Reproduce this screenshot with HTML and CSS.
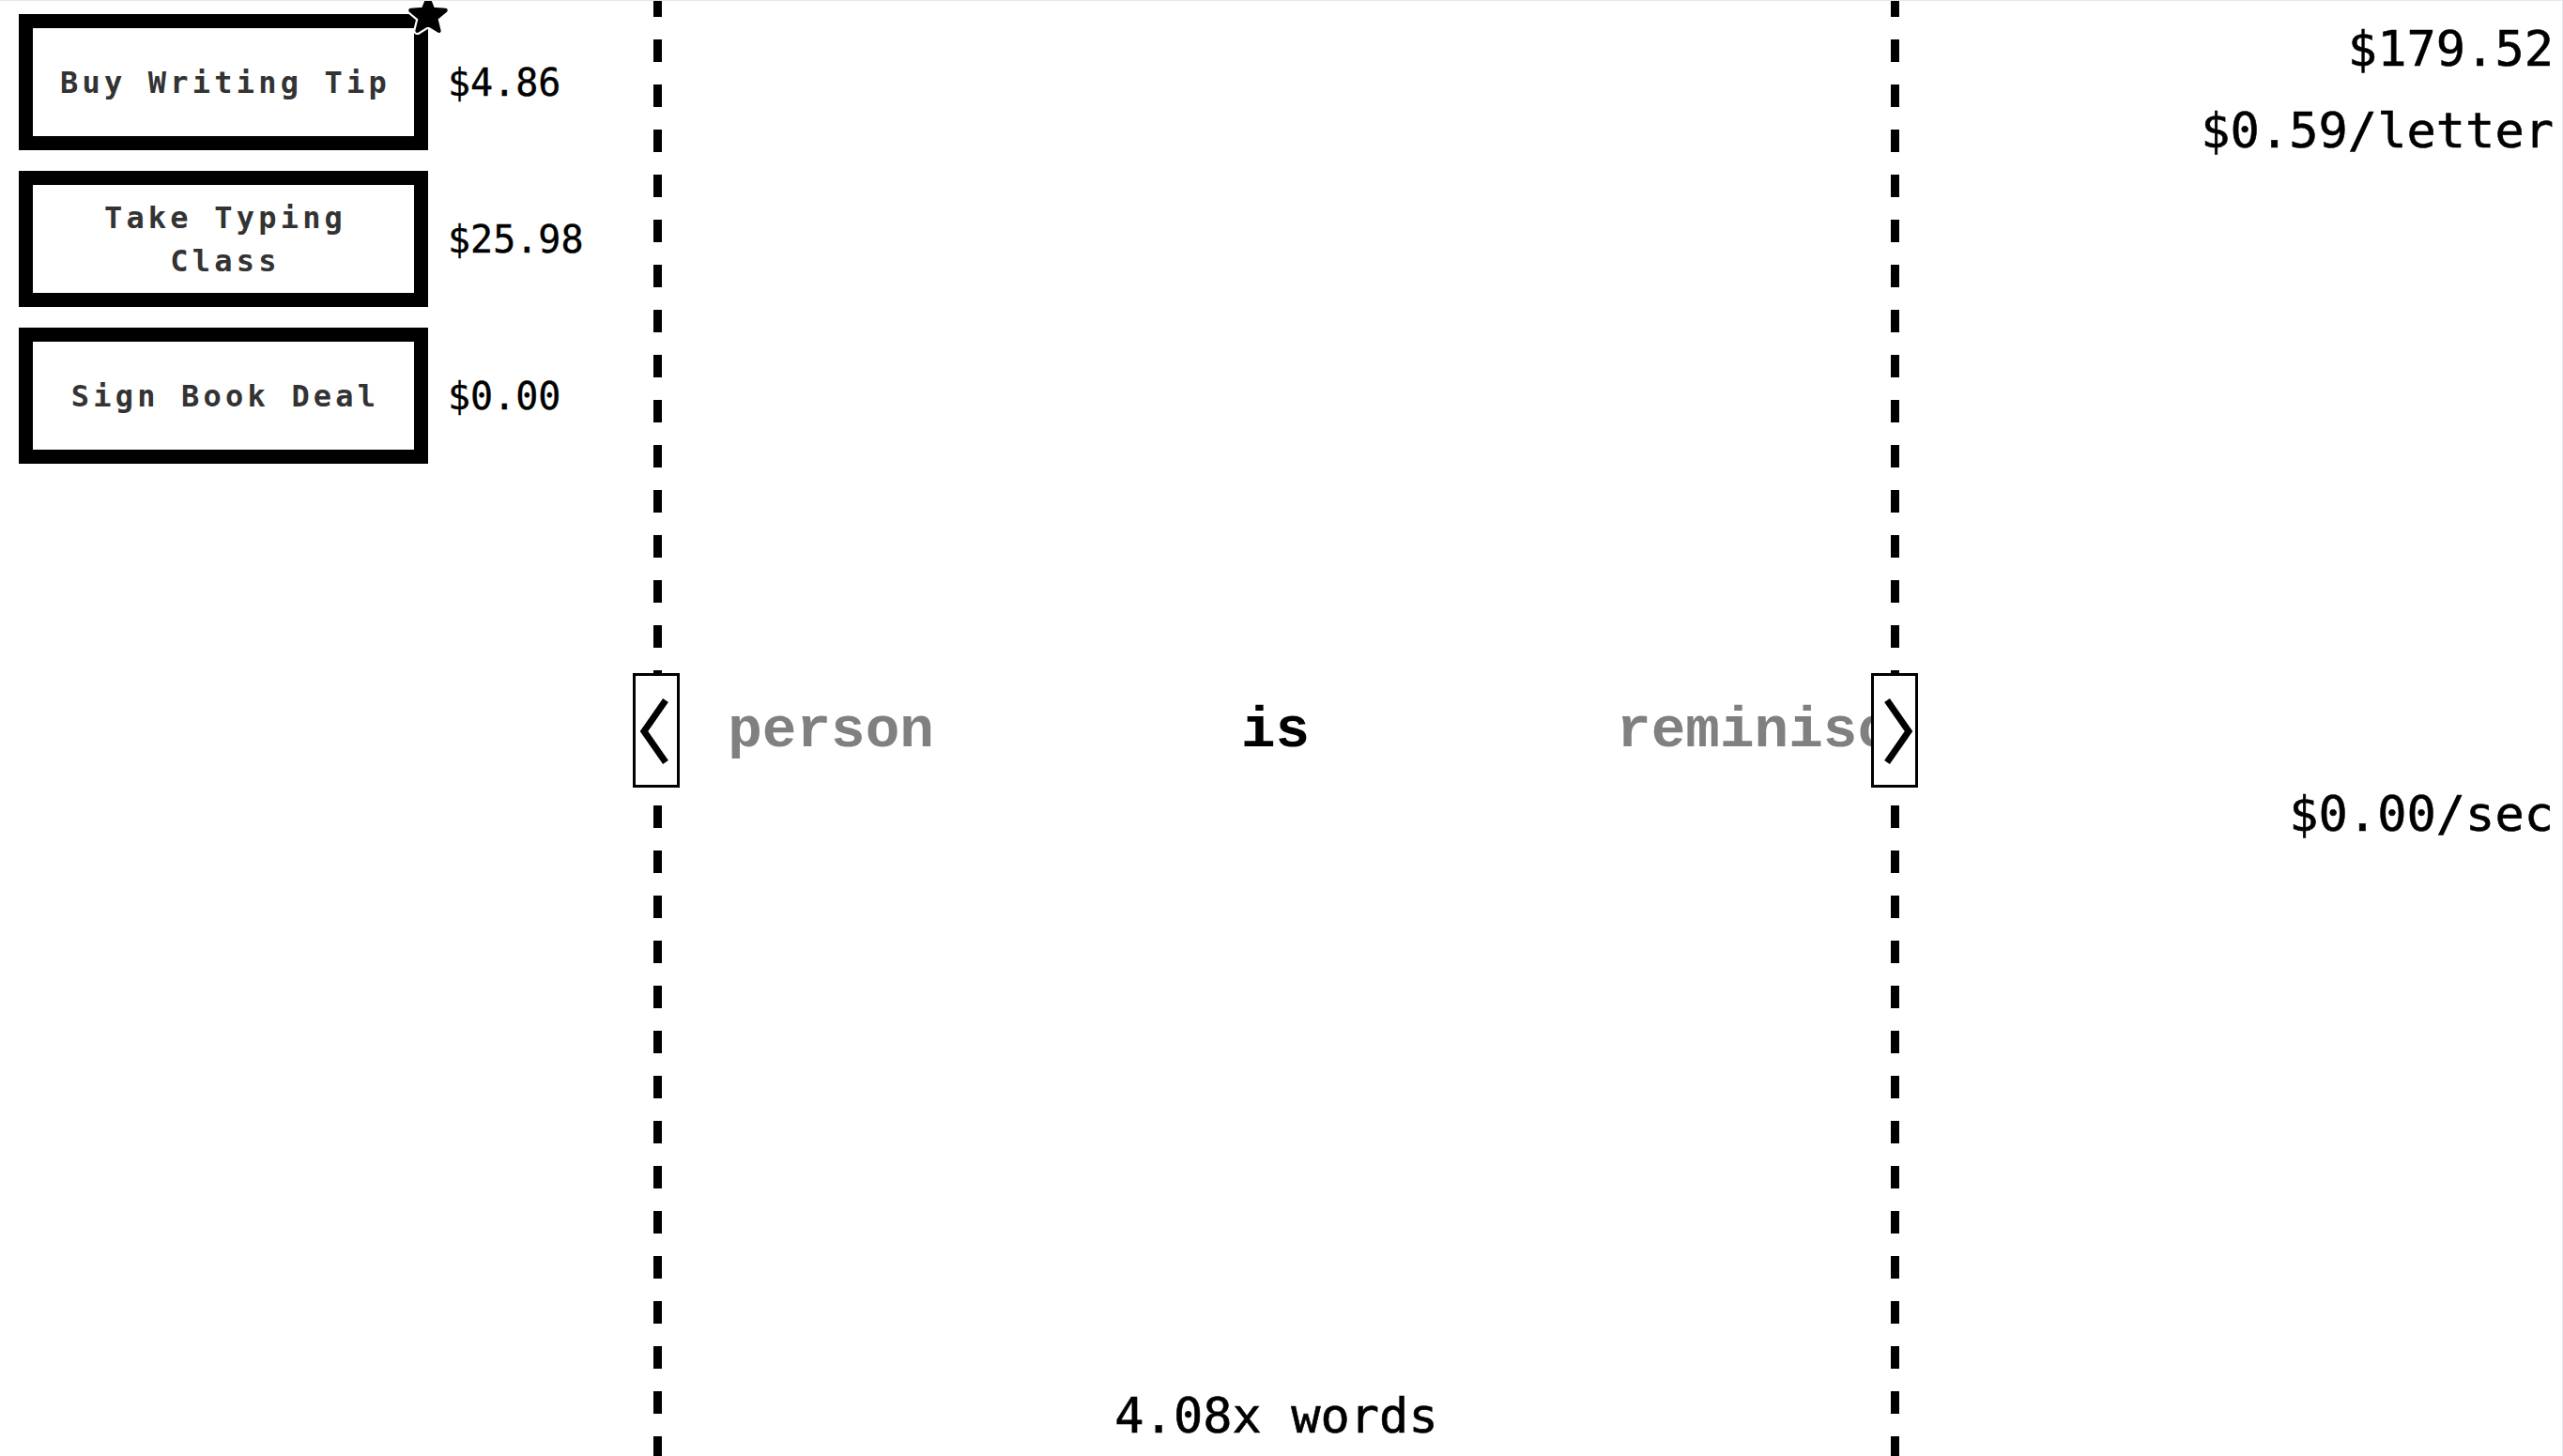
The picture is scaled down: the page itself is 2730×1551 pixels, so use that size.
FILE: index.html
```html
<!DOCTYPE html>
<html lang="en">
<head>
<meta charset="utf-8">
<title>Word Tycoon</title>
<link rel="stylesheet" href="styles.css">
</head>
<body>
<div class="app">
  <aside class="shop">
    <div class="shop-item">
      <div class="btn-wrap">
        <button class="shop-btn">Buy Writing Tip</button>
        <svg class="badge-star" viewBox="0 0 48 48" aria-hidden="true">
          <path class="star-outline" d="M24 6 L28.7 17.53 L41.12 18.44 L31.61 26.47 L34.58 38.56 L24 32 L13.42 38.56 L16.39 26.47 L6.88 18.44 L19.3 17.53 Z"/>
          <path class="star-fill" d="M24 6 L28.7 17.53 L41.12 18.44 L31.61 26.47 L34.58 38.56 L24 32 L13.42 38.56 L16.39 26.47 L6.88 18.44 L19.3 17.53 Z"/>
        </svg>
      </div>
      <span class="shop-price">$4.86</span>
    </div>
    <div class="shop-item">
      <div class="btn-wrap">
        <button class="shop-btn">Take Typing Class</button>
      </div>
      <span class="shop-price">$25.98</span>
    </div>
    <div class="shop-item">
      <div class="btn-wrap">
        <button class="shop-btn">Sign Book Deal</button>
      </div>
      <span class="shop-price">$0.00</span>
    </div>
  </aside>

  <main class="stage">
    <div class="carousel">
      <button class="nav-btn" aria-label="Previous word">
        <svg viewBox="0 0 44 116" aria-hidden="true"><polyline points="32,26 9,59 32,92"/></svg>
      </button>
      <div class="word-track">
        <span class="word side prev-word">person</span>
        <span class="word current">is</span>
        <span class="word side next-word">reminiscent</span>
      </div>
      <button class="nav-btn" aria-label="Next word">
        <svg viewBox="0 0 44 116" aria-hidden="true"><polyline points="14,26 37,59 14,92"/></svg>
      </button>
    </div>
    <div class="stage-footer">4.08x words</div>
  </main>

  <aside class="stats">
    <div class="stat">$179.52</div>
    <div class="stat rate">$0.59/letter</div>
    <div class="stat income">$0.00/sec</div>
  </aside>
</div>
</body>
</html>
```

FILE: styles.css
```css
html, body {
  margin: 0;
  padding: 0;
  background: #fff;
}

body {
  font-family: "DejaVu Sans Mono", "Liberation Mono", monospace;
  color: #000;
}

.app {
  display: grid;
  grid-template-columns: 696px 1327px 1fr;
  height: 100vh;
  box-sizing: border-box;
  border-top: 1px solid #e3e6ea;
  border-right: 1px solid #e3e6ea;
  overflow: hidden;
}

/* ---------- left shop column ---------- */
.shop {
  display: flex;
  flex-direction: column;
  gap: 22px;
  padding: 14px 0 0 20px;
}

.shop-item {
  display: flex;
  align-items: center;
  gap: 21px;
}

.btn-wrap {
  position: relative;
  flex: none;
}

.shop-btn {
  display: block;
  width: 436px;
  height: 145px;
  box-sizing: border-box;
  border: 15px solid #000;
  background: #fff;
  color: #333;
  font-family: "DejaVu Sans Mono", monospace;
  font-weight: bold;
  font-size: 32px;
  letter-spacing: 4.2px;
  line-height: 46px;
  padding: 0 20px 0 24px;
  text-align: center;
  cursor: pointer;
}

.shop-price {
  font-size: 40px;
  color: #000;
  white-space: nowrap;
  -webkit-text-stroke: 0.4px currentColor;
}

.badge-star {
  position: absolute;
  left: 410px;
  top: -24px;
  width: 52px;
  height: 52px;
  z-index: 2;
  overflow: visible;
}

.star-outline {
  fill: #fff;
  stroke: #fff;
  stroke-width: 8;
  stroke-linejoin: round;
}

.star-fill {
  fill: #000;
  stroke: #000;
  stroke-width: 4;
  stroke-linejoin: round;
}

/* ---------- middle stage ---------- */
.stage {
  display: grid;
  grid-template-rows: 1fr auto 1fr;
  padding: 0 9px;
  min-width: 0;
  background:
    linear-gradient(to bottom, #000 0 24px, transparent 24px 48px) left -7px / 9px 48px repeat-y,
    linear-gradient(to bottom, #000 0 24px, transparent 24px 48px) right -7px / 9px 48px repeat-y;
}

.carousel {
  grid-row: 2;
  display: flex;
  align-items: center;
  height: 122px;
  margin: 4px -29px 0 -31px;
}

.nav-btn {
  flex: none;
  width: 50px;
  height: 122px;
  box-sizing: border-box;
  border: 3px solid #000;
  background: #fff;
  padding: 0;
  display: block;
  cursor: pointer;
  position: relative;
  z-index: 1;
}

.nav-btn svg {
  display: block;
  width: 44px;
  height: 116px;
}

.nav-btn polyline {
  fill: none;
  stroke: #000;
  stroke-width: 7;
  stroke-linejoin: miter;
  stroke-linecap: butt;
}

.word-track {
  flex: 1;
  min-width: 0;
  overflow: hidden;
  display: grid;
  grid-template-columns: minmax(0, 1fr) auto minmax(0, 1fr);
  column-gap: 327px;
  align-items: center;
  font-family: "Liberation Mono", "DejaVu Sans Mono", monospace;
  font-weight: bold;
  font-size: 61px;
  white-space: nowrap;
}

.word.side {
  color: #808080;
}

.word.current {
  color: #000;
}

.prev-word {
  justify-self: end;
}

.next-word {
  justify-self: start;
}

.stage-footer {
  grid-row: 3;
  align-self: end;
  text-align: center;
  font-size: 52px;
  line-height: 60px;
  padding-bottom: 13px;
  -webkit-text-stroke: 0.6px currentColor;
}

/* ---------- right stats column ---------- */
.stats {
  padding: 21px 9px 0 0;
  text-align: right;
}

.stat {
  font-size: 52px;
  line-height: 60px;
  white-space: nowrap;
  -webkit-text-stroke: 0.6px currentColor;
}

.stat.rate {
  margin-top: 27px;
}

.stat.income {
  margin-top: 668px;
}
```
